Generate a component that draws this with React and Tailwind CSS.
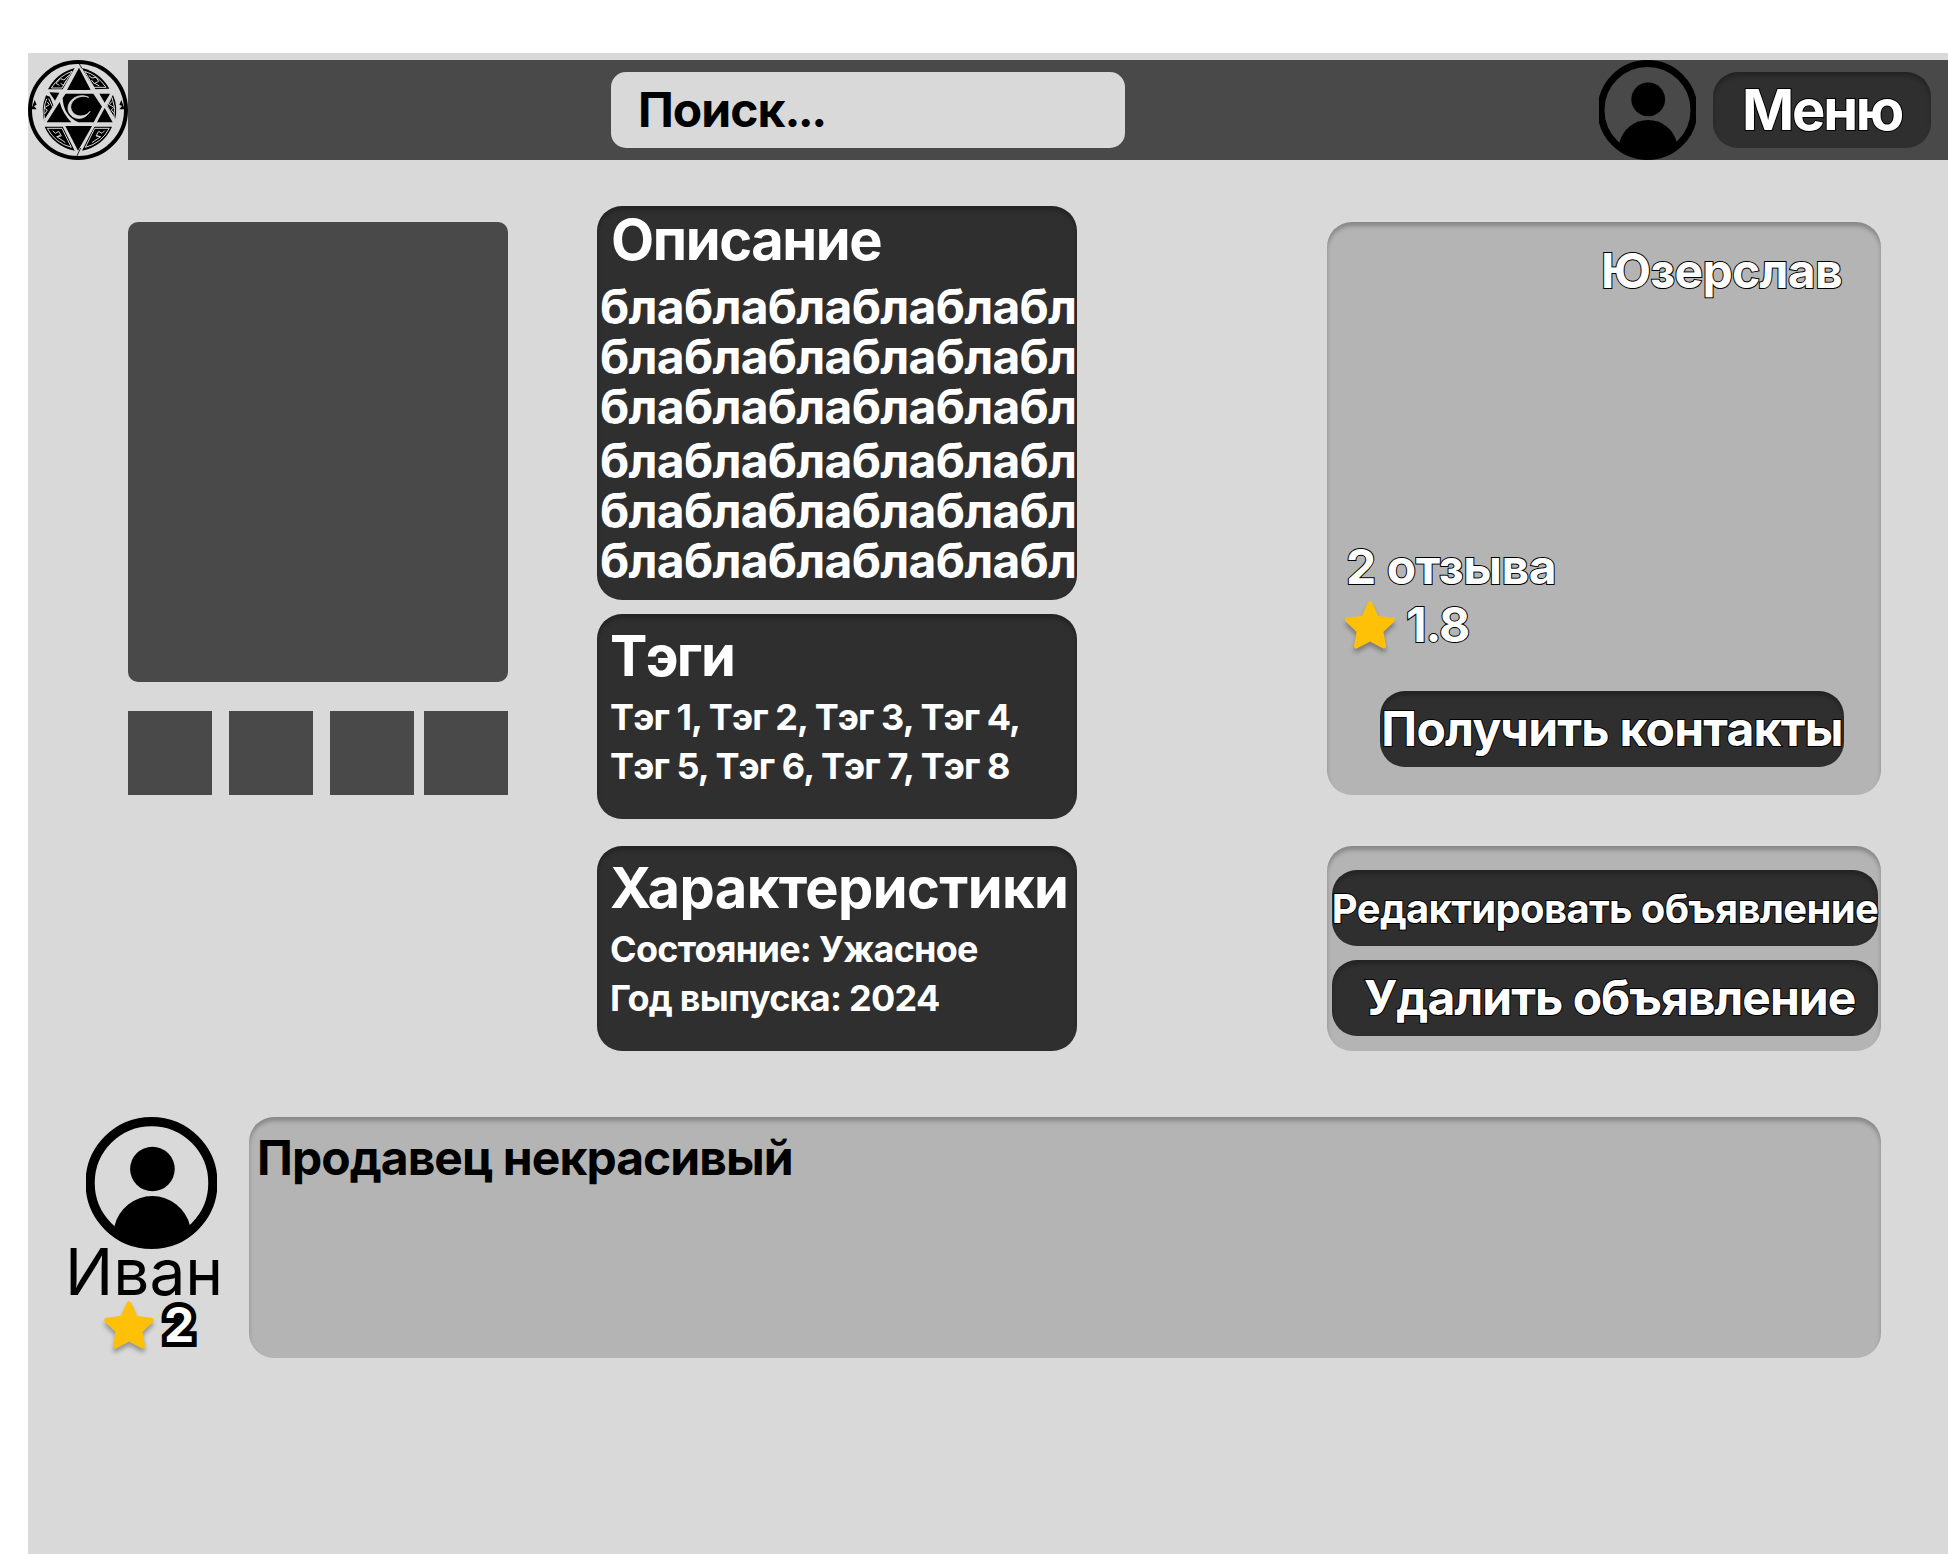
import React from "react";

const INSET = "shadow-[inset_0_4px_4px_rgba(0,0,0,0.25)]";
const OUTLINE = "[-webkit-text-stroke:2px_#000] [paint-order:stroke_fill]";

function Logo() {
  return (
    <svg viewBox="0 0 300 300" className="h-[100px] w-[100px] shrink-0">
      <circle cx="150" cy="150" r="144" fill="none" stroke="#000" strokeWidth="12" />
      <path d="M20 120l6 14-8 4 8 10H10zM280 120l-6 14 8 4-8 10h16z" />
      {/* engraved segments between the star's points */}
      <g fill="#000">
        <path d="M140 24A128 128 0 0 0 60 88L104 88z" />
        <path d="M162 24A128 128 0 0 1 244 86L196 88z" />
        <path d="M54 106A118 118 0 0 0 50 188L78 142 66 110z" />
        <path d="M254 102A118 118 0 0 1 260 184L234 138z" />
        <path d="M50 200A120 120 0 0 0 140 272L104 200z" />
        <path d="M252 200A120 120 0 0 1 162 272L198 200z" />
      </g>
      <g fill="none" stroke="#d9d9d9" strokeWidth="3">
        <path d="M132 34A120 120 0 0 0 70 84H102L132 34M122 46l-14 14-10-4-14 14 10 6M116 60l-10 16-8-6" />
        <path d="M170 34A120 120 0 0 1 234 82H198L170 34M182 46l10 8 12-2 8 12-12 6 14 8M190 60l10 12" />
        <path d="M56 116A112 112 0 0 0 50 180L74 142 62 116M58 126l6 8-16 10 10 6-8 12" />
        <path d="M252 112A112 112 0 0 1 258 174L238 138 250 112M252 124l-8 10 14 8-8 8 8 10" />
        <path d="M58 205A113 113 0 0 0 130 262L102 205H58M74 212l8 8 10-6 8 14-14 2 18 12 8 6M96 226l-8 4" />
        <path d="M244 205A113 113 0 0 1 172 262L200 205H244M230 212l-8 8-10-6-8 14 14 2-18 12-8 6M206 226l8 4" />
      </g>
      {/* solid parts of the hexagram, separated by light bands */}
      <path
        d="M60 96H260L152 282z M154 16L272 192H42z"
        fill="#d9d9d9"
      />
      <g fill="#000">
        <path d="M153 23L188 90H117z" />
        <path d="M64 97L94 98 81 122z" />
        <path d="M214 101H246L230 128z" />
        <path d="M95 126Q104 160 130 187H56z" />
        <path d="M230 144L254 187H207z" />
        <path d="M112 198H192L150 272z" />
        <path d="M113 101H196L222 140 197 187H152Q106 168 104 114z" />
      </g>
      <path d="M154 12L162 26M144 294L158 264" fill="none" stroke="#000" strokeWidth="2.500" />
      <path d="M182 112C154 98 122 116 120 144C120 176 166 190 186 154C170 176 132 172 128 142C128 118 158 102 182 112z" fill="#d9d9d9" stroke="#d9d9d9" strokeWidth="2.500" />
    </svg>
  );
}

function Avatar({ className, viewBox }) {
  return (
    <svg viewBox={viewBox} className={className}>
      <circle cx="50" cy="50" r="46.5" fill="none" stroke="#000" strokeWidth="7" />
      <circle cx="50.7" cy="39.4" r="16.9" />
      <path d="M22 82.500A29.400 29.400 0 0 1 79.200 82.500L72 91 60 96H40L28 91z" />
    </svg>
  );
}

function Star() {
  return (
    <svg
      viewBox="0 0 50 48"
      className="h-12 w-[50px] shrink-0 overflow-visible drop-shadow-[0_4px_2px_rgba(0,0,0,0.3)]"
    >
      <path
        d="M25 2.500L31.500 17 47.500 19 36 30 38.800 45.300 25 38 11.200 45.300 14 30 2.500 19 18.500 17z"
        fill="#ffc107"
        stroke="#ffc107"
        strokeWidth="4.500"
        strokeLinejoin="round"
      />
    </svg>
  );
}

function DarkButton({ className, children }) {
  return (
    <button
      className={
        "flex h-[76px] items-center whitespace-nowrap rounded-[25px] bg-[#2f2f2f] font-bold text-white " +
        INSET + " " + OUTLINE + " " + className
      }
    >
      {children}
    </button>
  );
}

function Card({ className, children }) {
  return (
    <section className={"w-[480px] whitespace-nowrap rounded-[25px] bg-[#2f2f2f] font-bold text-white " + INSET + " " + className}>
      {children}
    </section>
  );
}

const bla = "блаблаблаблаблабл";

export default function App() {
  return (
    <div className="h-[1554px] w-[1948px] overflow-hidden bg-white pl-7 pt-[53px] font-['Inter',sans-serif] text-black">
      <div className="h-[1501px] w-[1920px] bg-[#d9d9d9] pt-[7px]">
        <header className="flex h-[100px]">
          <Logo />
          <div className="flex flex-1 items-center bg-[#494949]">
            <div className="ml-[483px] flex h-[76px] w-[514px] items-center rounded-[15px] bg-[#d9d9d9] pl-[27px] text-5xl font-bold tracking-[-1px]">
              Поиск<span className="tracking-[-2.6px]">...</span>
            </div>
            <Avatar viewBox="1.5 0 97 100" className="ml-[474px] h-[100px] w-[97px]" />
            <DarkButton className="ml-[17px] w-[218px] pl-[29px] text-[56px] tracking-[-2.2px]">Меню</DarkButton>
          </div>
        </header>

        <main className="flex items-start">
          <div className="ml-[100px] mt-[62px] w-[380px]">
            <div className="h-[460px] rounded-[10px] bg-[#494949]" />
            <div className="mt-[29px] flex gap-[17px]">
              <div className="size-[84px] bg-[#494949]" />
              <div className="size-[84px] bg-[#494949]" />
              <div className="size-[84px] bg-[#494949]" />
              <div className="-ml-[7px] size-[84px] bg-[#494949]" />
            </div>
          </div>

          <div className="ml-[89px] mt-[46px] w-[480px]">
            <Card className="h-[394px]">
              <h2 className="pl-[14px] text-[56px] leading-[68px] tracking-[-1.4px]">Описание</h2>
              <div className="pl-[3px] pt-2 text-5xl leading-[50px] tracking-[-0.75px]">
                <p>{bla}</p>
                <p>{bla}</p>
                <p>{bla}</p>
                <p className="mt-1">{bla}</p>
                <p>{bla}</p>
                <p>{bla}</p>
              </div>
            </Card>
            <Card className="mt-[14px] h-[205px] pl-[13px] pt-2">
              <h2 className="text-[56px] leading-[68px] tracking-[-1.7px]">Тэги</h2>
              <p className="mt-[3px] text-4xl leading-[49px] tracking-[-0.88px]">
                Тэг 1, Тэг 2, Тэг 3, Тэг 4,
                <br />
                Тэг 5, Тэг 6, Тэг 7, Тэг 8
              </p>
            </Card>
            <Card className="mt-[27px] h-[205px] pl-[13px] pt-2">
              <h2 className="text-[56px] leading-[68px] tracking-[-0.6px]">Характеристики</h2>
              <p className="mt-[3px] text-4xl leading-[49px] tracking-[-0.74px]">
                Состояние: Ужасное
                <br />
                Год выпуска: 2024
              </p>
            </Card>
          </div>

          <div className="ml-[250px] mt-[62px] w-[554px]">
            <section className={"flex h-[573px] flex-col rounded-[25px] bg-[#b4b4b4] pt-5 text-5xl font-bold leading-[58px] text-white " + INSET}>
              <div className={"pr-[39px] text-right tracking-[-0.7px] " + OUTLINE}>Юзерслав</div>
              <div className={"mt-[238px] pl-[19px] tracking-[-0.4px] " + OUTLINE}>2 отзыва</div>
              <div className="flex items-center pl-[18px]">
                <Star />
                <span className={"pl-[11px] tracking-[-1.2px] " + OUTLINE}>1.8</span>
              </div>
              <DarkButton className="ml-[53px] mt-[37px] w-[464px] justify-center text-5xl tracking-[-0.78px]">Получить контакты</DarkButton>
            </section>
            <section className={"mt-[51px] flex h-[205px] flex-col gap-[14px] rounded-[25px] bg-[#b4b4b4] pl-[5px] pt-6 " + INSET}>
              <DarkButton className="w-[546px] justify-center pt-px text-[40px] tracking-[-0.65px]">Редактировать объявление</DarkButton>
              <DarkButton className="w-[546px] pl-8 text-5xl tracking-[-1px]">Удалить объявление</DarkButton>
            </section>
          </div>
        </main>

        <div className="mt-[66px] flex items-start">
          <div className="w-[221px]">
            <Avatar viewBox="0.4 0 99.2 100" className="ml-[58px] h-[132px] w-[131px]" />
            <div className="-mt-4 pl-[37px] text-[64px] leading-[78px]">Иван</div>
            <div className="-mt-[15px] flex items-center pl-[76px]">
              <Star />
              <span className="pl-[10px] text-5xl font-bold leading-[58px] text-white [-webkit-text-stroke:10px_#000] [paint-order:stroke_fill]">
                2
              </span>
            </div>
          </div>
          <section className={"h-[241px] w-[1632px] rounded-[25px] bg-[#b4b4b4] pl-2 pt-3 text-5xl font-bold leading-[58px] tracking-[-0.97px] " + INSET}>
            Продавец некрасивый
          </section>
        </div>
      </div>
    </div>
  );
}
